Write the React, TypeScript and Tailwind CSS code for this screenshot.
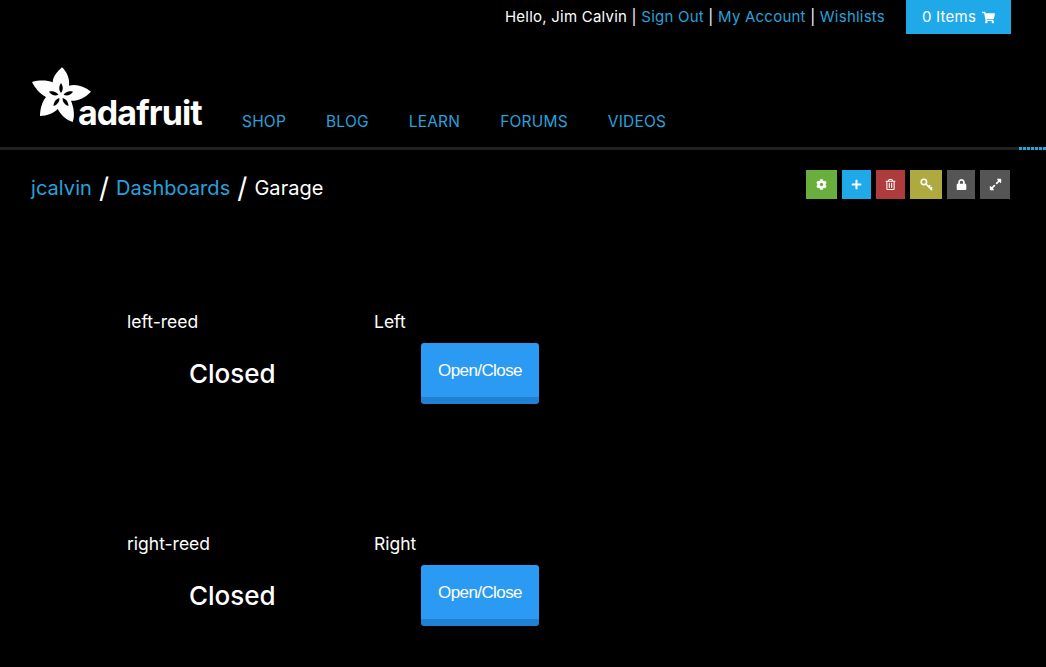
import React from 'react';
import { FaCog, FaPlus, FaRegTrashAlt, FaLock, FaExpandAlt, FaShoppingCart } from 'react-icons/fa';

const navItems = ['SHOP', 'BLOG', 'LEARN', 'FORUMS', 'VIDEOS'];

const FlowerLogo = () => (
  <svg viewBox="0 0 60 60" className="w-[60px] h-[60px] shrink-0">
    <path
      fill="#fff"
      d="M21.7 16.3 C22 10 27 5 31 1.3 C36 6 39 13 38 19.7 C45 18 53 20 60 25.7 C54 32 47 35 40 34.7 C43 42 44 50 41.7 56 C35 54 30 49 26.7 43 C23 47 16 50 9 50 C9 43 11 36 15 31 C9 28 4 22 1 16 C8 14 16 14 21.7 16.3 Z"
    />
    {[0, 72, 144, 216, 288].map(angle => (
      <path
        key={angle}
        fill="#000"
        transform={`rotate(${angle} 30 29.7)`}
        d="M30 27 C27.5 24 27.8 20 30 17 C32.2 20 32.5 24 30 27 Z"
      />
    ))}
  </svg>
);

const KeyIcon = () => (
  <svg viewBox="0 0 14 14" className="w-[13px] h-[13px]" fill="none" stroke="#fff" strokeWidth="1.7">
    <circle cx="4.2" cy="4.2" r="2.9" />
    <path d="M6.4 6.4 L13 13 M9.4 9.4 L11 7.8 M11.4 11.4 L13 9.8" />
  </svg>
);

const ToolButton = ({ color, width, children }: { color: string; width: string; children: React.ReactNode }) => (
  <div className={`${color} ${width} h-[29px] flex items-center justify-center text-white`}>{children}</div>
);

const Block = ({ label, title }: { label: string; title: string }) => (
  <div className="flex">
    <div className="w-[247px]">
      <div className="text-[17.5px] leading-[20px] text-white">{label}</div>
      <div className="pl-[62px] pt-[22px] text-[26px] leading-[40px] font-medium text-white">Closed</div>
    </div>
    <div>
      <div className="text-[17.5px] leading-[20px] text-white">{title}</div>
      <button className="ml-[47px] mt-[11px] w-[118px] h-[61px] pt-[2px] rounded-[3px] bg-[#2a9af2] border-b-[7px] border-[#2080d2] text-white text-[17px] tracking-[-0.6px] font-['Liberation_Sans',sans-serif]">
        Open/Close
      </button>
    </div>
  </div>
);

export default function App() {
  return (
    <div className="min-h-[667px] bg-black font-['Inter',sans-serif] overflow-hidden">
      {/* Top bar */}
      <div className="flex justify-end items-start pr-[35px] h-[34px]">
        <div className="pt-[8px] text-[15px] tracking-[0.23px] leading-[18px] text-white">
          Hello, Jim Calvin | <a className="text-[#27a2dc]">Sign Out</a> | <a className="text-[#27a2dc]">My Account</a> |{' '}
          <a className="text-[#27a2dc]">Wishlists</a>
        </div>
        <div className="ml-[21px] w-[105px] h-[34px] bg-[#1fa9e8] text-white text-[15px] tracking-[0.23px] flex items-center justify-center gap-[6px]">
          0 Items <FaShoppingCart className="text-[13px]" />
        </div>
      </div>

      {/* Header */}
      <div className="flex items-end h-[116px] border-b-[3px] border-[#222] relative">
        <div className="flex items-start w-[211px] pl-[31px] pb-[14px] shrink-0">
          <FlowerLogo />
          <span className="-ml-[13px] mt-[27px] text-[34px] leading-[40px] font-bold tracking-[-0.9px] text-white">
            adafruit
          </span>
        </div>
        <nav className="flex gap-[40px] ml-[31px] pb-[16px] text-[15.5px] tracking-[0.2px] leading-[18px] text-[#27a2dc]">
          {navItems.map(item => (
            <a key={item}>{item}</a>
          ))}
        </nav>
        <div className="absolute right-0 -bottom-[3px] w-[27px] h-[3px] bg-[repeating-linear-gradient(90deg,#27a2dc_0,#27a2dc_3px,transparent_3px,transparent_4px)]" />
      </div>

      {/* Breadcrumb + tools */}
      <div className="flex justify-between items-start pl-[31px] pr-[36px] pt-[20px]">
        <div className="flex items-center text-[20px] tracking-[0.05px] leading-[36px]">
          <a className="text-[#27a2dc]">jcalvin</a>
          <span className="text-white text-[28px] mx-[7px]">/</span>
          <a className="text-[#27a2dc]">Dashboards</a>
          <span className="text-white text-[28px] mx-[7px]">/</span>
          <span className="text-white">Garage</span>
        </div>
        <div className="flex gap-[5px]">
          <ToolButton color="bg-[#6aaf3d]" width="w-[31px]"><FaCog className="text-[11px]" /></ToolButton>
          <ToolButton color="bg-[#1fa9e8]" width="w-[29px]"><FaPlus className="text-[11px]" /></ToolButton>
          <ToolButton color="bg-[#ae3c3c]" width="w-[29px]"><FaRegTrashAlt className="text-[11px]" /></ToolButton>
          <ToolButton color="bg-[#aeaa3f]" width="w-[32px]"><KeyIcon /></ToolButton>
          <ToolButton color="bg-[#555]" width="w-[28px]"><FaLock className="text-[11px]" /></ToolButton>
          <ToolButton color="bg-[#555]" width="w-[30px]"><FaExpandAlt className="text-[13px]" /></ToolButton>
        </div>
      </div>

      {/* Dashboard blocks */}
      <div className="pl-[127px] pt-[106px] flex flex-col gap-[130px]">
        <Block label="left-reed" title="Left" />
        <Block label="right-reed" title="Right" />
      </div>
    </div>
  );
}
